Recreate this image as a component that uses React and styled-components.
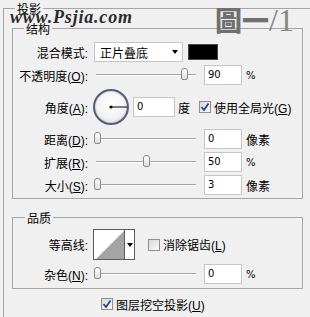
import React from 'react'
import styled, { createGlobalStyle } from 'styled-components'

const GlobalStyle = createGlobalStyle`
  html, body {
    margin: 0;
    padding: 0;
    background: #f0f0f0;
  }
  body {
    font-family: "Noto Sans CJK SC", "Noto Sans", sans-serif;
    font-size: 12px;
    color: #000;
  }
`

const Page = styled.div`
  position: relative;
  width: 310px;
  height: 317px;
  overflow: hidden;
  background: #f0f0f0;
`

const Frame = styled.fieldset`
  box-sizing: border-box;
  width: 330px;
  min-height: 340px;
  min-inline-size: 0;
  margin: 2px 0 0 3px;
  padding: 0;
  border: 1px solid #a6a6a6;
`

const Legend = styled.legend`
  margin-left: ${({ $indent }) => $indent}px;
  padding: 0 2px;
  font-size: 12px;
  line-height: 13px;
`

const Group = styled.fieldset`
  box-sizing: border-box;
  width: 291px;
  min-inline-size: 0;
  margin: ${({ $top }) => $top}px 0 0 8px;
  padding: ${({ $pad }) => $pad};
  border: 1px solid #a6a6a6;
`

const Body = styled.div`
  display: flex;
  flex-direction: column;
  gap: ${({ $gap }) => $gap}px;
`

const Row = styled.div`
  display: flex;
  align-items: center;
  height: ${({ $h }) => $h || 22}px;
`

const Label = styled.span`
  flex: none;
  width: 75px;
  margin-right: 6px;
  text-align: right;
  white-space: nowrap;
`

const Key = styled.span`
  font-family: "Liberation Sans", Arial, sans-serif;
  font-size: 12px;
`

const Select = styled.div`
  box-sizing: border-box;
  display: flex;
  align-items: center;
  justify-content: space-between;
  width: 89px;
  height: 20px;
  padding: 0 4px 0 5px;
  background: #fff;
  border: 1px solid #c6c6c6;
`

const Caret = styled.span`
  width: 0;
  height: 0;
  border-left: 3.5px solid transparent;
  border-right: 3.5px solid transparent;
  border-top: 4px solid #000;
`

const Swatch = styled.div`
  box-sizing: border-box;
  width: 30px;
  height: 16px;
  margin-left: 5px;
  background: #000;
  border: 1px solid #444;
`

const Track = styled.div`
  position: relative;
  flex: none;
  width: 104px;
  height: 14px;

  &::before {
    content: '';
    position: absolute;
    left: 2px;
    right: 2px;
    top: 6px;
    height: 1px;
    background: #a3a3a3;
    box-shadow: 0 1px 0 #fff;
  }
`

const Thumb = styled.div`
  position: absolute;
  top: 0;
  box-sizing: border-box;
  width: 7px;
  height: 12px;
  border: 1px solid #8a8a8a;
  border-radius: 3px 3px 2px 2px;
  background: linear-gradient(#ffffff, #dedede);
`

const NumBox = styled.div`
  box-sizing: border-box;
  flex: none;
  width: ${({ $w }) => $w || 38}px;
  height: 20px;
  margin-left: ${({ $ml }) => $ml || 0}px;
  padding-left: 3px;
  background: #fff;
  border: 1px solid #c6c6c6;
  font-family: "DejaVu Sans", sans-serif;
  font-size: 10px;
  line-height: 18px;
`

const Unit = styled.span`
  margin-left: ${({ $ml }) => $ml || 4}px;
  font-family: ${({ $latin }) =>
    $latin ? '"DejaVu Sans", sans-serif' : '"Noto Sans CJK SC", sans-serif'};
  font-size: ${({ $latin }) => ($latin ? 10 : 12)}px;
`

const Dial = styled.div`
  box-sizing: border-box;
  flex: none;
  width: 36px;
  height: 36px;
  margin-left: -1px;
  border-radius: 50%;
  border: 2px solid #555d7a;
  background: radial-gradient(circle at 50% 40%, #ffffff 0%, #f3f3f3 55%, #d6d7de 100%);
  box-shadow: inset 0 0 2px rgba(0, 0, 0, 0.25);
`

const Box = styled.span`
  box-sizing: border-box;
  display: flex;
  align-items: center;
  justify-content: center;
  flex: none;
  width: 12px;
  height: 12px;
  margin-left: ${({ $ml }) => $ml || 0}px;
  border: 1px solid #8e8e8e;
  background: linear-gradient(135deg, #d8d8d8, #fbfbfb);
`

const BoxText = styled.span`
  margin-left: 3px;
  white-space: nowrap;
`

const Contour = styled.div`
  box-sizing: border-box;
  display: flex;
  flex: none;
  width: 42px;
  height: 31px;
  margin-left: -1px;
  background: #fff;
  border: 1px solid #5c5c5c;
`

const ContourDrop = styled.div`
  display: flex;
  flex: 1;
  align-items: center;
  justify-content: center;
  border-left: 1px solid #5c5c5c;
`

const Footer = styled.div`
  display: flex;
  align-items: center;
  height: 16px;
  margin: 7px 0 0 97px;
`

const Watermark = styled.div`
  position: absolute;
  left: 10px;
  top: 8px;
  font-family: "Liberation Serif", serif;
  font-style: italic;
  font-weight: bold;
  font-size: 18px;
  line-height: 18px;
  letter-spacing: 0.8px;
  color: #2b2b2b;
`

const Seal = styled.div`
  position: absolute;
  left: 215px;
  top: 4px;
  display: flex;
  align-items: center;
  height: 32px;
  color: #707070;
`

const SealHan = styled.span`
  font-family: "Noto Sans CJK TC", sans-serif;
  font-weight: 900;
  font-size: 27px;
  line-height: 32px;
`

const SealNum = styled.span`
  font-family: "Liberation Serif", serif;
  font-size: 32px;
  line-height: 32px;
  color: #858585;
`

const Hot = ({ k, colon }) => (
  <Key>
    (<u>{k}</u>){colon && ':'}
  </Key>
)

const Slider = ({ value }) => (
  <Track>
    <Thumb style={{ left: Math.round((value / 100) * 97) }} />
  </Track>
)

const Check = ({ on, ml, children }) => (
  <>
    <Box $ml={ml}>
      {on && (
        <svg width="10" height="10" viewBox="0 0 10 10">
          <polyline points="1.5,5 4,8 8.5,1.5" fill="none" stroke="#2d3f8f" strokeWidth="1.8" />
        </svg>
      )}
    </Box>
    <BoxText>{children}</BoxText>
  </>
)

const SliderRow = ({ label, k, value, num, unit, latin }) => (
  <Row>
    <Label>
      {label}
      <Hot k={k} colon />
    </Label>
    <Slider value={value} />
    <NumBox $ml={6}>{num}</NumBox>
    <Unit $latin={latin}>{unit}</Unit>
  </Row>
)

export default function App() {
  return (
    <Page>
      <GlobalStyle />
      <Frame>
        <Legend $indent={11}>投影</Legend>

        <Group $top={7} $pad="6px 0 2px 0">
          <Legend $indent={11}>结构</Legend>
          <Body $gap={1}>
            <Row>
              <Label>
                混合模式<Key>:</Key>
              </Label>
              <Select>
                <span>正片叠底</span>
                <Caret />
              </Select>
              <Swatch />
            </Row>
            <SliderRow label="不透明度" k="O" value={90} num="90" unit="%" latin />
            <Row $h={40}>
              <Label>
                角度<Hot k="A" colon />
              </Label>
              <Dial>
                <svg width="32" height="32" viewBox="0 0 32 32">
                  <line x1="16" y1="16" x2="32" y2="16" stroke="#000" strokeWidth="1" />
                  <circle cx="16" cy="16" r="1.6" fill="#000" />
                </svg>
              </Dial>
              <NumBox $w={42} $ml={4}>
                0
              </NumBox>
              <Unit $ml={3}>度</Unit>
              <Check on ml={9}>
                使用全局光<Hot k="G" />
              </Check>
            </Row>
            <SliderRow label="距离" k="D" value={0} num="0" unit="像素" />
            <SliderRow label="扩展" k="R" value={50} num="50" unit="%" latin />
            <SliderRow label="大小" k="S" value={0} num="3" unit="像素" />
          </Body>
        </Group>

        <Group $top={12} $pad="5px 0 3px 0">
          <Legend $indent={12}>品质</Legend>
          <Body $gap={3}>
            <Row $h={31}>
              <Label>
                等高线<Key>:</Key>
              </Label>
              <Contour>
                <svg width="30" height="29" viewBox="0 0 30 29">
                  <polygon points="2,29 30,1 30,29" fill="#a4a4a4" />
                </svg>
                <ContourDrop>
                  <Caret />
                </ContourDrop>
              </Contour>
              <Check ml={13}>
                消除锯齿<Hot k="L" />
              </Check>
            </Row>
            <SliderRow label="杂色" k="N" value={0} num="0" unit="%" latin />
          </Body>
        </Group>

        <Footer>
          <Check on>
            图层挖空投影<Hot k="U" />
          </Check>
        </Footer>
      </Frame>

      <Watermark>www.Psjia.com</Watermark>
      <Seal>
        <SealHan>圖一</SealHan>
        <SealNum>/1</SealNum>
      </Seal>
    </Page>
  )
}
